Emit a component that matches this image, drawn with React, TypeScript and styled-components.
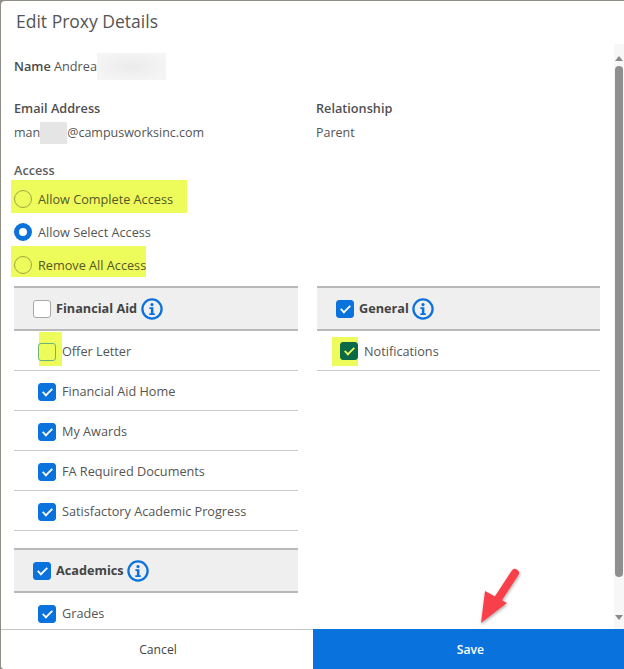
import React from "react";
import styled, { createGlobalStyle } from "styled-components";

const GlobalStyle = createGlobalStyle`
  html, body {
    margin: 0;
    padding: 0;
    background: #ffffff;
    font-family: "Open Sans", "Liberation Sans", sans-serif;
  }
`;

const financialAid = [
  { label: "Offer Letter", checked: false, marked: true },
  { label: "Financial Aid Home", checked: true, marked: false },
  { label: "My Awards", checked: true, marked: false },
  { label: "FA Required Documents", checked: true, marked: false },
  { label: "Satisfactory Academic Progress", checked: true, marked: false },
];

function InfoIcon() {
  return (
    <InfoSvg viewBox="0 0 22 22">
      <circle cx="11" cy="11" r="9.6" fill="none" stroke="#0a72dc" strokeWidth="2.3" />
      <circle cx="11" cy="6.6" r="1.6" fill="#0a72dc" />
      <path d="M8.4 9.3h4v6h1.4v1.7H8.3v-1.7h1.6v-4.3H8.4z" fill="#0a72dc" />
    </InfoSvg>
  );
}

function App() {
  return (
    <Page>
      <GlobalStyle />
      <Dialog>
        <Title>Edit Proxy Details</Title>
        <Body>
          <Content>
            <NameRow>
              <strong>Name</strong>&nbsp;Andrea
              <NameBlur />
            </NameRow>
            <DetailGrid>
              <div>
                <FieldLabel>Email Address</FieldLabel>
                <FieldValue>
                  man
                  <EmailBlur />
                  @campusworksinc.com
                </FieldValue>
              </div>
              <div>
                <FieldLabel>Relationship</FieldLabel>
                <FieldValue>Parent</FieldValue>
              </div>
            </DetailGrid>
            <AccessLabel>Access</AccessLabel>
            <RadioRow>
              <RadioMark $marked $pad={14} $height={33} $lift={5}>
                <Radio $marked />
                Allow Complete Access
              </RadioMark>
            </RadioRow>
            <RadioRow>
              <RadioMark $pad={14} $height={33} $lift={0}>
                <Radio $selected />
                Allow Select Access
              </RadioMark>
            </RadioRow>
            <RadioRow>
              <RadioMark $marked $pad={0} $height={31} $lift={7}>
                <Radio $marked />
                Remove All Access
              </RadioMark>
            </RadioRow>
            <Columns>
              <Column>
                <Section>
                  <SectionHeader>
                    <Checkbox />
                    <SectionName>Financial Aid</SectionName>
                    <InfoIcon />
                  </SectionHeader>
                  {financialAid.map((item) =>
                    item.marked ? (
                      <ItemRow key={item.label}>
                        <OfferMark>
                          <Checkbox $marked />
                        </OfferMark>
                        {item.label}
                      </ItemRow>
                    ) : (
                      <ItemRow key={item.label}>
                        <PlainCheck>
                          <Checkbox $checked={item.checked} />
                        </PlainCheck>
                        {item.label}
                      </ItemRow>
                    )
                  )}
                </Section>
                <Section>
                  <SectionHeader>
                    <Checkbox $checked />
                    <SectionName>Academics</SectionName>
                    <InfoIcon />
                  </SectionHeader>
                  <ItemRow>
                    <PlainCheck>
                      <Checkbox $checked />
                    </PlainCheck>
                    Grades
                  </ItemRow>
                </Section>
              </Column>
              <Column>
                <Section>
                  <SectionHeader>
                    <Checkbox $checked />
                    <SectionName>General</SectionName>
                    <InfoIcon />
                  </SectionHeader>
                  <ItemRow>
                    <NotifyMark>
                      <Checkbox $checked $green />
                    </NotifyMark>
                    Notifications
                  </ItemRow>
                </Section>
              </Column>
            </Columns>
          </Content>
          <Scrollbar>
            <ArrowUp />
            <Thumb />
            <ArrowDown />
          </Scrollbar>
        </Body>
        <Footer>
          <CancelButton>Cancel</CancelButton>
          <SaveButton>Save</SaveButton>
        </Footer>
      </Dialog>
      <RedArrow viewBox="0 0 60 70">
        <defs>
          <filter id="arrowShadow" x="-30%" y="-30%" width="160%" height="160%">
            <feDropShadow dx="0.5" dy="1.5" stdDeviation="1.5" floodColor="#000" floodOpacity="0.35" />
          </filter>
        </defs>
        <g filter="url(#arrowShadow)">
          <line x1="41" y1="9" x2="22" y2="38" stroke="#f8414b" strokeWidth="8" strokeLinecap="round" />
          <polygon points="11,27 33,39 7,59" fill="#f8414b" />
        </g>
      </RedArrow>
    </Page>
  );
}

const Page = styled.div`
  position: relative;
  width: 624px;
  height: 669px;
  overflow: hidden;
  background: #8f8d86;
  padding: 1px 0 0 1px;
  box-sizing: border-box;
`;

const Dialog = styled.div`
  display: flex;
  flex-direction: column;
  height: 100%;
  background: #ffffff;
  border-radius: 4px 0 0 4px;
  overflow: hidden;
  color: #555555;
  font-size: 12.7px;
  line-height: 20px;
`;

const Title = styled.h1`
  flex: none;
  height: 43px;
  margin: 0;
  padding-left: 15px;
  font-size: 17.5px;
  font-weight: 400;
  line-height: 41px;
  color: #555555;
`;

const Body = styled.div`
  flex: 1;
  min-height: 0;
  display: flex;
  overflow: hidden;
`;

const Content = styled.div`
  width: 613px;
  padding: 12px 14px 0 13px;
  box-sizing: border-box;
  flex: none;
`;

const NameRow = styled.div`
  display: flex;
  align-items: center;
  height: 20px;

  strong {
    font-weight: 600;
    color: #4a4a4a;
  }
`;

const NameBlur = styled.span`
  width: 69px;
  height: 27px;
  background: radial-gradient(ellipse at center, #ebebeb 0%, #f5f5f5 80%);
`;

const DetailGrid = styled.div`
  display: grid;
  grid-template-columns: 302px 1fr;
  margin-top: 22px;
`;

const FieldLabel = styled.div`
  font-weight: 600;
  color: #4f4f4f;
`;

const FieldValue = styled.div`
  display: flex;
  align-items: center;
  height: 20px;
  margin-top: 5px;
  font-size: 12.5px;
`;

const EmailBlur = styled.span`
  width: 27px;
  height: 22px;
  background: #e5e5e5;
`;

const AccessLabel = styled(FieldLabel)`
  margin-top: 17px;
  margin-bottom: 2px;
  color: #5c5c5c;
`;

const RadioRow = styled.div`
  display: flex;
  align-items: center;
  height: 33px;
`;

const RadioMark = styled.div<{ $marked?: boolean; $pad: number; $height: number; $lift: number }>`
  display: flex;
  align-items: center;
  gap: 6px;
  box-sizing: border-box;
  height: ${(p) => p.$height}px;
  margin: ${(p) => -p.$lift}px 0 0 -3px;
  padding: ${(p) => p.$lift}px ${(p) => p.$pad}px 0 3px;
  background: ${(p) => (p.$marked ? "#edfb5b" : "transparent")};
  color: ${(p) => (p.$marked ? "#55582a" : "#555555")};
`;

const Radio = styled.span<{ $selected?: boolean; $marked?: boolean }>`
  flex: none;
  width: 18px;
  height: 18px;
  border-radius: 50%;
  box-sizing: border-box;
  background: ${(p) => (p.$selected ? "#ffffff" : "transparent")};
  border: ${(p) =>
    p.$selected ? "5px solid #0a72dc" : p.$marked ? "1px solid #a3a845" : "1px solid #999999"};
`;

const Columns = styled.div`
  display: grid;
  grid-template-columns: 284px 283px;
  column-gap: 19px;
  margin-top: 5px;
`;

const Column = styled.div`
  display: flex;
  flex-direction: column;
  gap: 17px;
`;

const Section = styled.section`
  display: flex;
  flex-direction: column;
`;

const SectionHeader = styled.div`
  display: flex;
  align-items: center;
  height: 45px;
  box-sizing: border-box;
  padding-left: 19px;
  background: #efefef;
  border-top: 2px solid #b9b9b9;
  border-bottom: 2px solid #b9b9b9;
`;

const SectionName = styled.span`
  margin: -2px 3.5px 0 5px;
  font-weight: 700;
  color: #444444;
`;

const InfoSvg = styled.svg`
  flex: none;
  width: 22px;
  height: 22px;
`;

const ItemRow = styled.div`
  display: flex;
  align-items: center;
  height: 40px;
  box-sizing: border-box;
  border-bottom: 1px solid #c9c9c9;
`;

const PlainCheck = styled.span`
  display: flex;
  flex: none;
  margin: 2px 6px 0 24px;
`;

const OfferMark = styled.span`
  display: flex;
  flex: none;
  box-sizing: border-box;
  width: 23px;
  height: 34px;
  margin: -3px 0 0 25px;
  padding-top: 11px;
  background: #edfb5b;

  > span {
    margin-left: -1px;
  }
`;

const NotifyMark = styled.span`
  display: flex;
  flex: none;
  justify-content: flex-end;
  align-items: center;
  box-sizing: border-box;
  width: 26px;
  height: 29px;
  margin: 1px 6px 0 15px;
  background: #edfb5b;
`;

const Checkbox = styled.span<{ $checked?: boolean; $marked?: boolean; $green?: boolean }>`
  display: flex;
  align-items: center;
  justify-content: center;
  flex: none;
  width: 18px;
  height: 18px;
  box-sizing: border-box;
  border-radius: 3px;
  background: ${(p) =>
    p.$green ? "#0b6a45" : p.$checked ? "#0a72dc" : p.$marked ? "transparent" : "#ffffff"};
  border: 1px solid
    ${(p) => (p.$green ? "#0b6a45" : p.$checked ? "#0a72dc" : p.$marked ? "#6bb37a" : "#a8a8a8")};

  &::after {
    content: "";
    display: ${(p) => (p.$checked ? "block" : "none")};
    width: 9px;
    height: 4px;
    margin-top: -2px;
    border-left: 2px solid ${(p) => (p.$green ? "#edfb5b" : "#ffffff")};
    border-bottom: 2px solid ${(p) => (p.$green ? "#edfb5b" : "#ffffff")};
    transform: rotate(-45deg) scale(0.9);
  }
`;

const Scrollbar = styled.div`
  flex: 1;
  display: flex;
  flex-direction: column;
  align-items: center;
  background: #f7f7f7;
  padding-top: 12px;
`;

const ArrowUp = styled.span`
  width: 0;
  height: 0;
  border-left: 4px solid transparent;
  border-right: 4px solid transparent;
  border-bottom: 5px solid #8a8a8a;
`;

const ArrowDown = styled.span`
  width: 0;
  height: 0;
  margin-top: 38px;
  border-left: 4px solid transparent;
  border-right: 4px solid transparent;
  border-top: 5px solid #8a8a8a;
`;

const Thumb = styled.div`
  width: 8px;
  height: 511px;
  margin-top: 5px;
  border-radius: 4px;
  background: #8f8f8f;
`;

const Footer = styled.div`
  flex: none;
  display: grid;
  grid-template-columns: 312px 1fr;
  height: 40px;
`;

const CancelButton = styled.button`
  border: 0;
  border-top: 1px solid #c4c4c4;
  padding: 0 0 0 2px;
  background: #ffffff;
  color: #444444;
  font: 500 12.2px "Open Sans", "Liberation Sans", sans-serif;
`;

const SaveButton = styled.button`
  border: 0;
  padding: 0 0 0 4px;
  background: #0a72dc;
  color: #ffffff;
  font: 600 12.2px "Open Sans", "Liberation Sans", sans-serif;
`;

const RedArrow = styled.svg`
  position: absolute;
  left: 474px;
  top: 564px;
  width: 60px;
  height: 70px;
`;

export default App;
